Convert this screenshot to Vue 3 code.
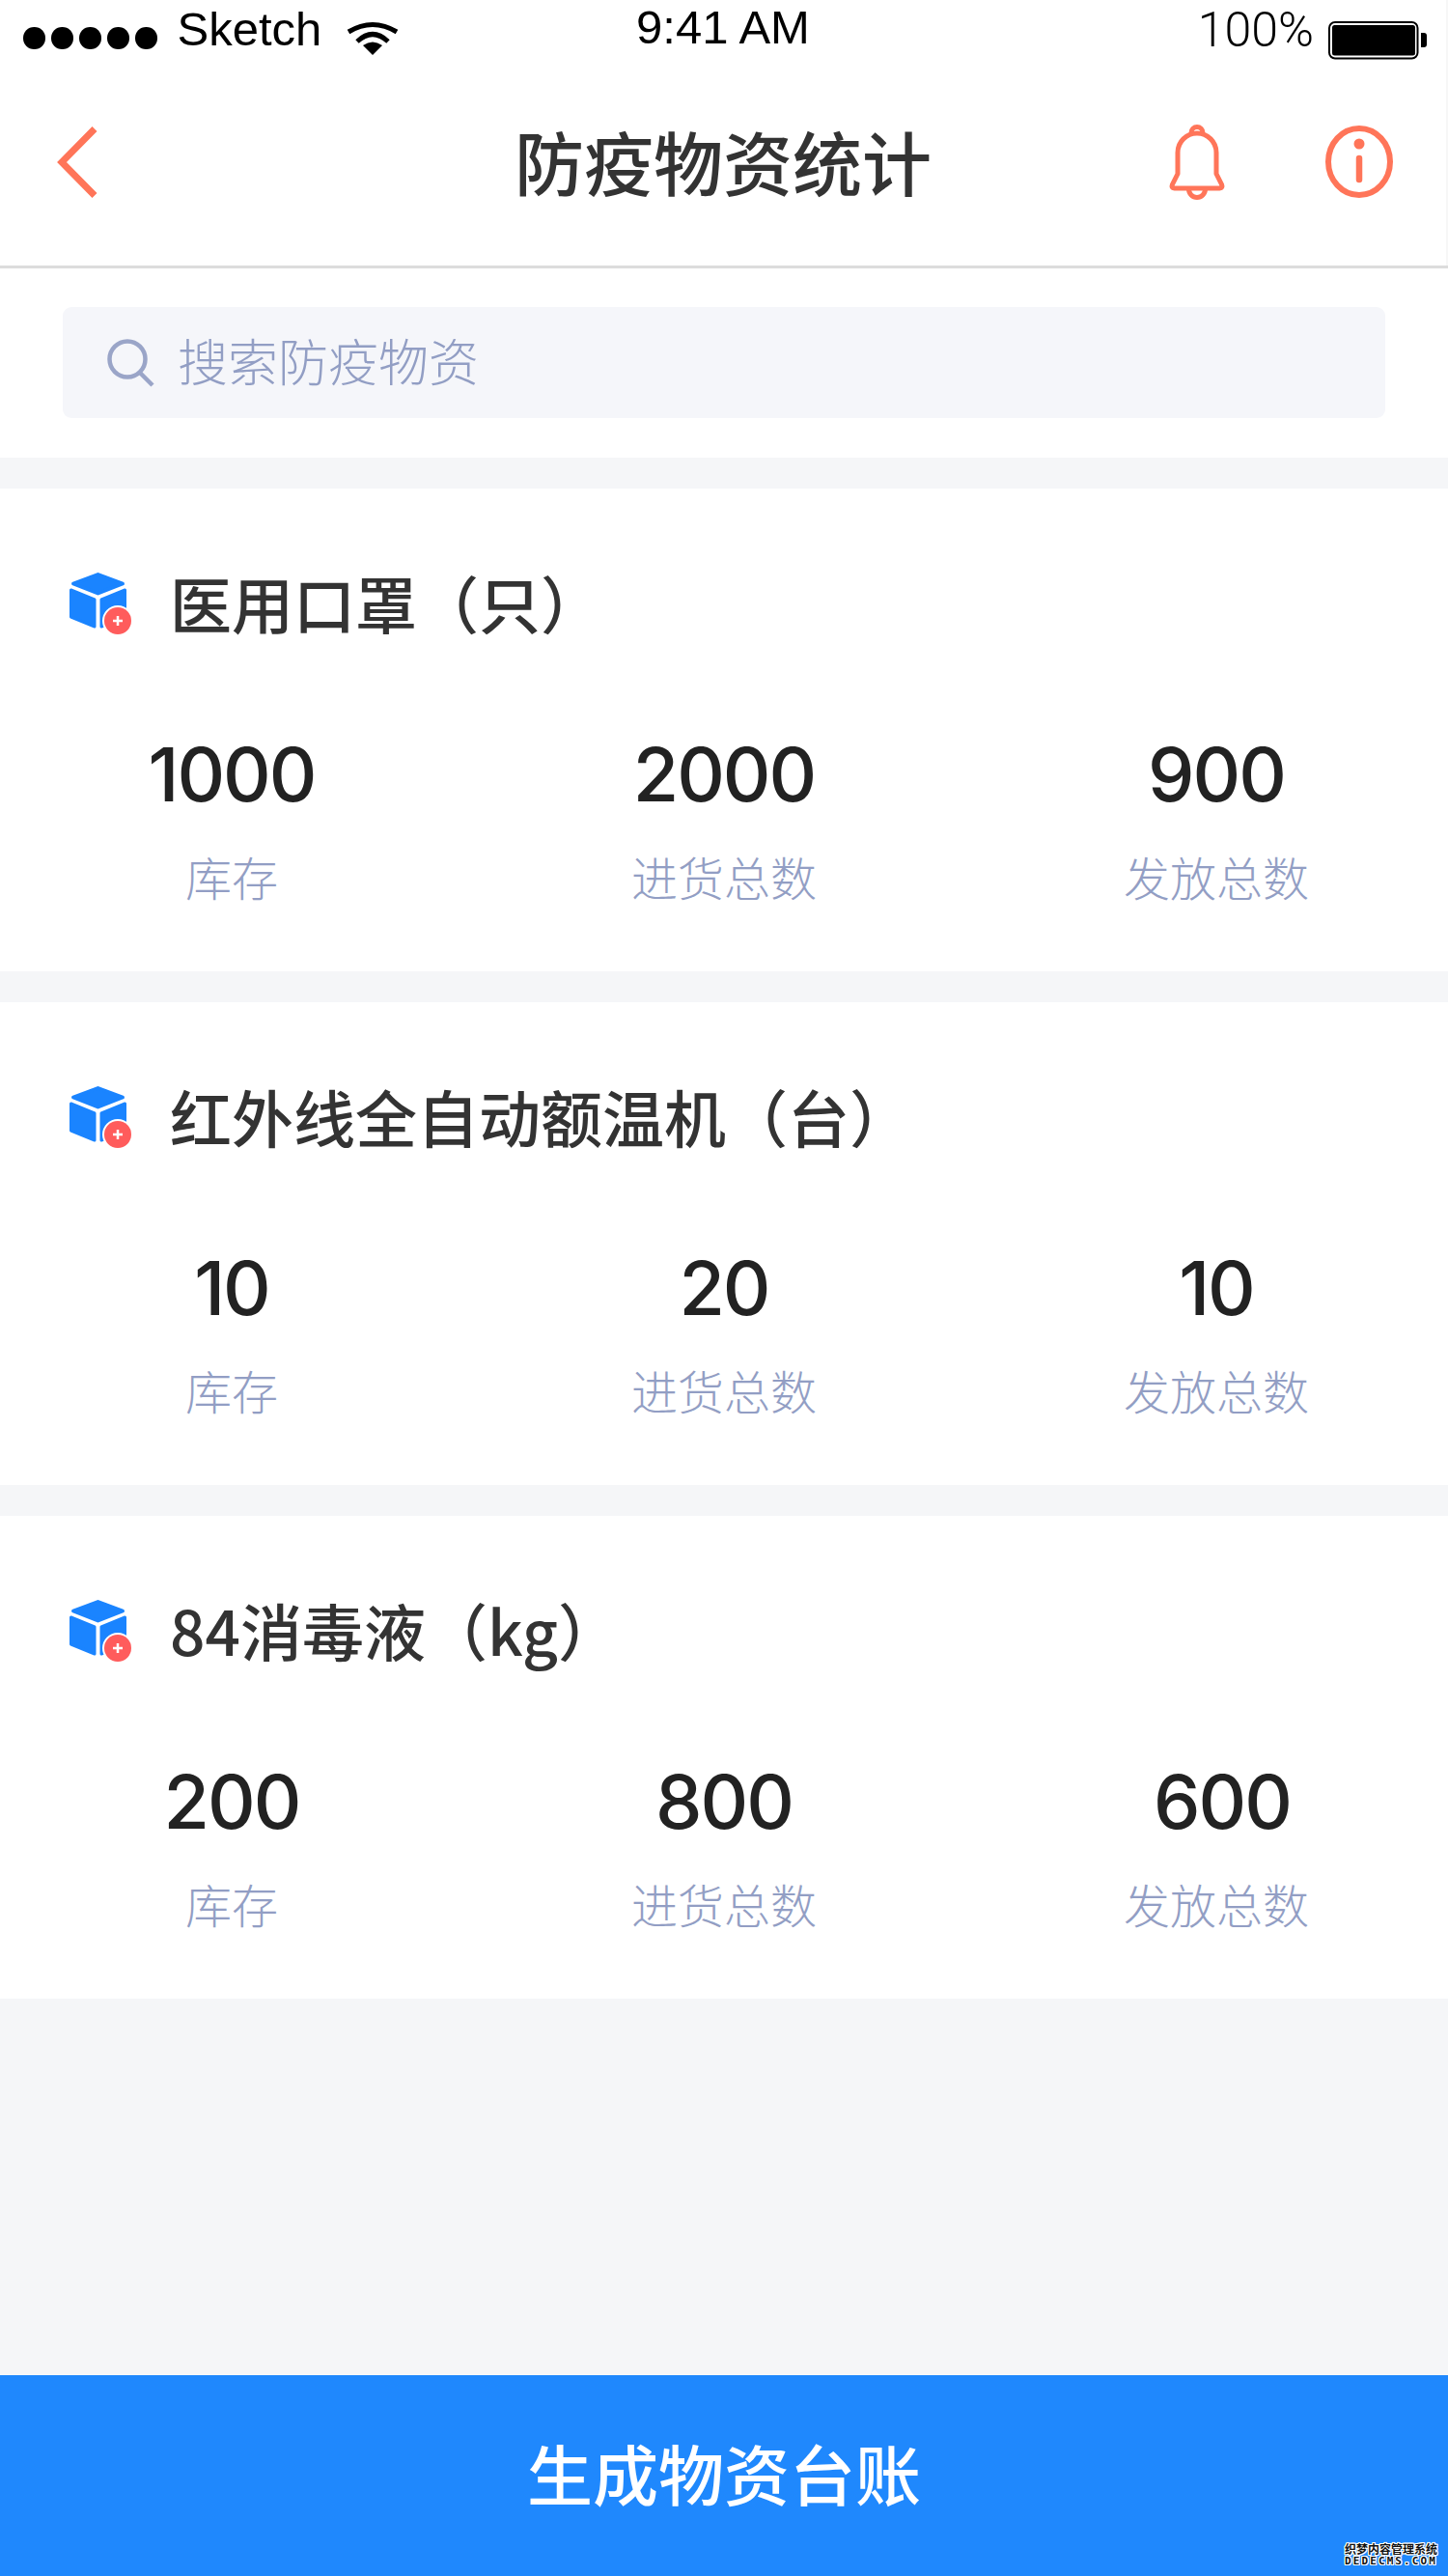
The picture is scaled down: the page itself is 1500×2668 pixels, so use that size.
<script setup>
// Stock figures shown on the epidemic-supply statistics page
const supplies = [
  { name: '医用口罩（只）', stats: [['1000', '库存'], ['2000', '进货总数'], ['900', '发放总数']] },
  { name: '红外线全自动额温机（台）', stats: [['10', '库存'], ['20', '进货总数'], ['10', '发放总数']] },
  { name: '84消毒液（kg）', stats: [['200', '库存'], ['800', '进货总数'], ['600', '发放总数', true]] },
]
const dots = [1, 2, 3, 4, 5]
</script>

<template>
  <div class="page">
    <header class="top">
      <div class="top-inner">
        <div class="status">
          <div class="status-left">
            <span class="dots"><i v-for="d in dots" :key="d" class="dot"></i></span>
            <span class="carrier">Sketch</span>
            <svg class="wifi" width="54" height="36" viewBox="358 22 54 36">
              <path d="M360 33Q385 18 410 33" fill="none" stroke="#000" stroke-width="5" />
              <path d="M369 43Q385 28 401 43" fill="none" stroke="#000" stroke-width="5" />
              <path d="M385 57L375 47Q385 40 395 47Z" fill="#000" />
            </svg>
          </div>
          <span class="clock">9:41 AM</span>
          <div class="status-right">
            <span class="percent">100%</span>
            <svg class="battery" width="104" height="40" viewBox="1375 22 104 40">
              <rect x="1377" y="23" width="91.5" height="37.5" rx="6" fill="none" stroke="#000" stroke-width="2" />
              <rect x="1380" y="26" width="86" height="31.5" rx="2.5" fill="#000" />
              <path d="M1472 34h3a3 3 0 0 1 3 3v9a3 3 0 0 1-3 3h-3Z" fill="#000" />
            </svg>
          </div>
        </div>
        <nav class="nav">
          <div class="nav-side">
            <svg width="48" height="80" viewBox="56 128 48 80">
              <path d="M98 133.500L64 168L98 202.500" fill="none" stroke="#ff7559" stroke-width="7" />
            </svg>
          </div>
          <h1 class="title">防疫物资统计</h1>
          <div class="nav-side nav-actions">
            <svg width="60" height="84" viewBox="1210 126 60 84" fill="none" stroke="#ff7559" stroke-width="5">
              <path d="M1220 180V158a20 20 0 0 1 40 0V180L1265.500 191q1.500 4-2 4H1216.500q-3.500 0-2-4Z" stroke-linejoin="round" />
              <path d="M1234 137.500a6 6 0 0 1 12 0" />
              <path d="M1231.500 196a8.500 8.500 0 0 0 17 0" />
            </svg>
            <svg width="74" height="80" viewBox="1371 128 74 80" fill="none" stroke="#ff7559">
              <ellipse cx="1408" cy="167.500" rx="32" ry="34.500" stroke-width="6" />
              <circle cx="1408" cy="149" r="5.500" fill="#ff7559" stroke="none" />
              <path d="M1408 164V186" stroke-width="6.500" stroke-linecap="round" />
            </svg>
          </div>
        </nav>
      </div>
    </header>

    <section class="search-wrap">
      <div class="search">
        <svg width="52" height="50" viewBox="110 351 52 50" fill="none" stroke="#9aa5c8" stroke-width="4.500">
          <circle cx="132" cy="372" r="18.500" />
          <path d="M145 386L158 399" />
        </svg>
        <span class="placeholder">搜索防疫物资</span>
      </div>
    </section>

    <section v-for="item in supplies" :key="item.name" class="card">
      <div class="card-head">
        <svg class="cube" width="66" height="68" viewBox="0 0 66 68">
          <path d="M29.500 4L55 13.500L29.500 23.500L4 13.500Z" fill="#1a84ff" stroke="#1a84ff" stroke-width="4" stroke-linejoin="round" />
          <path d="M1.500 20L26 30V58L1.500 48Z" fill="#1a84ff" stroke="#1a84ff" stroke-width="3" stroke-linejoin="round" />
          <path d="M57.500 20L33 30V58L57.500 48Z" fill="#1a84ff" stroke="#1a84ff" stroke-width="3" stroke-linejoin="round" />
          <circle cx="50" cy="52" r="16" fill="#fff" />
          <circle cx="50" cy="52" r="14" fill="#ff5c5c" />
          <path d="M45 52H55M50 47V57" stroke="#fff" stroke-width="2.500" />
        </svg>
        <h2 class="card-name">{{ item.name }}</h2>
      </div>
      <div class="stats">
        <div v-for="[value, label, nudged] in item.stats" :key="label" class="stat">
          <span class="value" :class="{ 'value-nudged': nudged }">{{ value }}</span>
          <span class="label">{{ label }}</span>
        </div>
      </div>
    </section>

    <div class="spacer"></div>

    <footer class="action">
      <span class="action-text">生成物资台账</span>
      <div class="mark">
        <span class="mark-cn">织梦内容管理系统</span>
        <span class="mark-en">DEDECMS.COM</span>
      </div>
    </footer>
  </div>
</template>

<style scoped>
.page {
  position: relative;
  width: 1500px;
  height: 2668px;
  display: flex;
  flex-direction: column;
  background: #f5f6f8;
  font-family: "Noto Sans CJK SC", "Liberation Sans", sans-serif;
  overflow: hidden;
}
.top {
  background: #fff;
  border-bottom: 3px solid #dcdcdc;
}
.top-inner {
  height: 275px;
  box-sizing: border-box;
  border-right: 2px solid #f7f7f7;
}
.status {
  height: 61px;
  display: grid;
  grid-template-columns: 1fr auto 1fr;
  align-items: start;
  font-family: "Liberation Sans", sans-serif;
  font-size: 49px;
  line-height: 56px;
  color: #000;
}
.status-left {
  display: flex;
  align-items: flex-start;
  padding-left: 24px;
}
.dots {
  display: flex;
  gap: 6.500px;
  margin-top: 28px;
}
.dot {
  width: 22.500px;
  height: 22.500px;
  border-radius: 50%;
  background: #000;
}
.carrier {
  margin-left: 21px;
  margin-top: 2px;
}
.wifi {
  margin-left: 26px;
  margin-top: 22px;
}
.clock {
  margin-top: 0;
}
.status-right {
  display: flex;
  justify-content: flex-end;
  align-items: flex-start;
  padding-right: 19px;
}
.percent {
  font-family: Roboto, sans-serif;
  font-weight: 300;
  font-size: 50px;
  line-height: 62px;
  margin-right: 14px;
}
.battery {
  margin-top: 22px;
}
.nav {
  height: 214px;
  display: grid;
  grid-template-columns: 1fr auto 1fr;
  align-items: center;
}
.nav-side {
  display: flex;
  align-items: center;
  padding-left: 56px;
}
.nav-actions {
  justify-content: flex-end;
  padding-left: 0;
  padding-right: 53px;
  gap: 101px;
}
.title {
  margin: -4px 0 0;
  font-size: 72px;
  line-height: 90px;
  font-weight: 500;
  color: #333;
}
.search-wrap {
  background: #fff;
  padding: 40px 65px 41px;
}
.search {
  height: 115px;
  display: flex;
  align-items: center;
  gap: 22px;
  padding-left: 45px;
  background: #f5f6fa;
  border-radius: 9px;
}
.placeholder {
  font-size: 52px;
  line-height: 60px;
  margin-top: -5px;
  font-weight: 300;
  color: #929ec4;
}
.card {
  height: 500px;
  margin-top: 32px;
  box-sizing: border-box;
  background: #fff;
  padding-top: 84px;
}
.card-head {
  display: flex;
  align-items: center;
  gap: 38px;
  height: 70px;
  padding-left: 72px;
}
.cube {
  flex: none;
}
.card-name {
  margin: -4px 0 0;
  font-size: 64px;
  line-height: 70px;
  font-weight: 500;
  color: #333;
}
.stats {
  display: grid;
  grid-template-columns: repeat(3, 400px);
  column-gap: 110px;
  padding: 96px 40px 0;
}
.stat {
  display: flex;
  flex-direction: column;
  align-items: center;
}
.value {
  font-family: Inter, "Liberation Sans", sans-serif;
  font-size: 77px;
  line-height: 92px;
  font-weight: 550;
  letter-spacing: -2px;
  color: #222;
}
.value-nudged {
  margin-left: 12px;
}
.label {
  margin-top: 31px;
  font-size: 48px;
  line-height: 56px;
  font-weight: 300;
  color: #929ec4;
}
.spacer {
  flex: 1;
}
.action {
  position: relative;
  height: 208px;
  box-sizing: border-box;
  padding-bottom: 6px;
  display: flex;
  align-items: center;
  justify-content: center;
  background: #1f88fd;
}
.action-text {
  font-size: 68px;
  line-height: 80px;
  font-weight: 500;
  color: #fff;
}
.mark {
  position: absolute;
  right: 11px;
  bottom: 9px;
  display: flex;
  flex-direction: column;
  align-items: center;
  color: #111;
  font-weight: 700;
  text-shadow: 1px 0 #fff, -1px 0 #fff, 0 1px #fff, 0 -1px #fff, 1px 1px #fff, -1px -1px #fff, 1px -1px #fff, -1px 1px #fff;
}
.mark-cn {
  font-size: 12px;
  line-height: 14px;
}
.mark-en {
  font-family: "DejaVu Sans Mono", monospace;
  font-size: 11px;
  line-height: 12px;
  letter-spacing: 2.100px;
}
</style>
